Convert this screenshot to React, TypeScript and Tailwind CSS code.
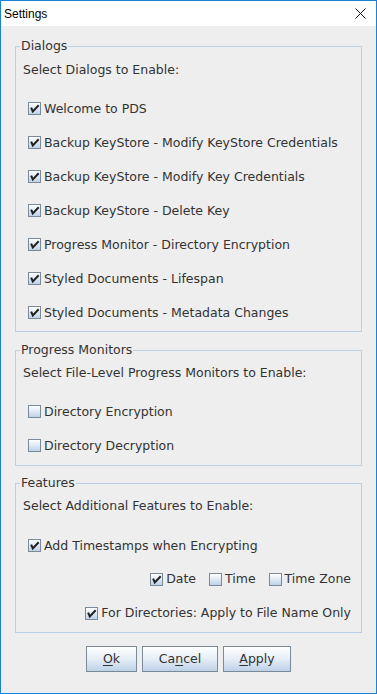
import React from "react";

const font = { fontFamily: '"DejaVu Sans", sans-serif' };

function Check({ checked }: { checked: boolean }) {
  return (
    <span className="w-[13px] h-[13px] shrink-0 border border-[#7a8a99] bg-linear-to-b from-white to-[#bfd2e8] flex items-center justify-center">
      {checked && (
        <svg width="11" height="11" viewBox="0 0 11 11">
          <path d="M2.5 5.5 L3.8 8.5 L9 3" fill="none" stroke="#222" strokeWidth="2" strokeLinecap="square" />
        </svg>
      )}
    </span>
  );
}

function Row({ label, checked }: { label: string; checked: boolean }) {
  return (
    <div className="h-[34px] flex items-center gap-[3px] pl-[8px]">
      <Check checked={checked} />
      <span className="leading-[15px]">{label}</span>
    </div>
  );
}

function Group({ title, children, pb }: { title: string; children: React.ReactNode; pb: string }) {
  return (
    <fieldset className={`border border-[#b8cfe5] pl-[4px] ${pb}`}>
      <legend className="px-[1px] h-[16px] leading-[16px]">{title}</legend>
      {children}
    </fieldset>
  );
}

function Btn({ pre, u, post, w }: { pre: string; u: string; post: string; w: string }) {
  return (
    <button className={`${w} h-[26px] border border-[#7a8a99] bg-linear-to-b from-white via-[#e6eef7] to-[#bdd1e7] text-[12.5px] text-[#333]`} style={font}>
      {pre}
      <span className="underline underline-offset-2">{u}</span>
      {post}
    </button>
  );
}

export default function App() {
  return (
    <div className="w-[377px] h-[694px] border border-[#1883d7] flex flex-col bg-[#eeeeee] text-[12.5px] text-[#333]" style={font}>
      <div className="h-[25px] bg-white flex items-center justify-between pl-[3px] pr-[10px] shrink-0">
        <span className="text-[12px] text-black" style={{ fontFamily: '"Liberation Sans", sans-serif' }}>Settings</span>
        <svg width="11" height="11" viewBox="0 0 11 11">
          <path d="M0.5 0.5 L10.5 10.5 M10.5 0.5 L0.5 10.5" stroke="#111" strokeWidth="1" />
        </svg>
      </div>
      <div className="flex flex-col px-[14px] pt-[12px]">
        <Group title="Dialogs" pb="pb-[2px]">
          <div className="h-[20px] mt-[6px] flex items-center pl-[3px]">Select Dialogs to Enable:</div>
          <div className="mt-[11px]">
            <Row label="Welcome to PDS" checked />
            <Row label="Backup KeyStore - Modify KeyStore Credentials" checked />
            <Row label="Backup KeyStore - Modify Key Credentials" checked />
            <Row label="Backup KeyStore - Delete Key" checked />
            <Row label="Progress Monitor - Directory Encryption" checked />
            <Row label="Styled Documents - Lifespan" checked />
            <Row label="Styled Documents - Metadata Changes" checked />
          </div>
        </Group>
        <div className="mt-[10px]">
          <Group title="Progress Monitors" pb="pb-[3px]">
            <div className="h-[20px] mt-[5px] flex items-center pl-[3px]">Select File-Level Progress Monitors to Enable:</div>
            <div className="mt-[11px]">
              <Row label="Directory Encryption" checked={false} />
              <Row label="Directory Decryption" checked={false} />
            </div>
          </Group>
        </div>
        <div className="mt-[9px]">
          <Group title="Features" pb="pb-[2px]">
            <div className="h-[20px] mt-[5px] flex items-center pl-[3px]">Select Additional Features to Enable:</div>
            <div className="mt-[12px]">
              <Row label="Add Timestamps when Encrypting" checked />
              <div className="h-[34px] flex items-center justify-end pr-[10px]">
                <div className="flex items-center gap-[3px]">
                  <Check checked />
                  <span>Date</span>
                </div>
                <div className="flex items-center gap-[3px] ml-[13px]">
                  <Check checked={false} />
                  <span>Time</span>
                </div>
                <div className="flex items-center gap-[3px] ml-[13px]">
                  <Check checked={false} />
                  <span>Time Zone</span>
                </div>
              </div>
              <div className="h-[34px] flex items-center justify-end pr-[10px]">
                <div className="flex items-center gap-[3px]">
                  <Check checked />
                  <span>For Directories: Apply to File Name Only</span>
                </div>
              </div>
            </div>
          </Group>
        </div>
        <div className="flex justify-center gap-[5px] mt-[13px]">
          <Btn pre="" u="O" post="k" w="w-[51px]" />
          <Btn pre="Ca" u="n" post="cel" w="w-[76px]" />
          <Btn pre="" u="A" post="pply" w="w-[68px]" />
        </div>
      </div>
    </div>
  );
}
